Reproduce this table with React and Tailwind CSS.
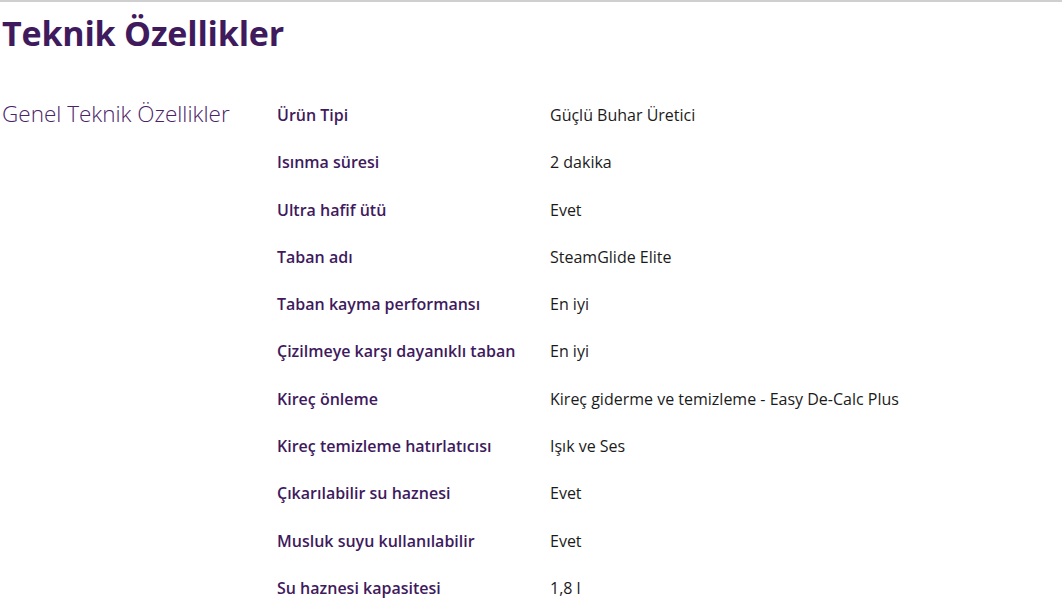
import React from 'react';

const SPECS = [
  ['Ürün Tipi', 'Güçlü Buhar Üretici'],
  ['Isınma süresi', '2 dakika'],
  ['Ultra hafif ütü', 'Evet'],
  ['Taban adı', 'SteamGlide Elite'],
  ['Taban kayma performansı', 'En iyi'],
  ['Çizilmeye karşı dayanıklı taban', 'En iyi'],
  ['Kireç önleme', 'Kireç giderme ve temizleme - Easy De-Calc Plus'],
  ['Kireç temizleme hatırlatıcısı', 'Işık ve Ses'],
  ['Çıkarılabilir su haznesi', 'Evet'],
  ['Musluk suyu kullanılabilir', 'Evet'],
  ['Su haznesi kapasitesi', '1,8 l'],
];

export default function App() {
  return (
    <div className="min-h-[606px] bg-white border-t-2 border-[#cfcfcf] font-['Open_Sans',sans-serif] overflow-hidden">
      <h1 className="pl-[2px] pt-[8px] text-[34px] leading-[46px] font-bold text-[#3f1a5d] tracking-[-0.2px]">
        Teknik Özellikler
      </h1>

      {/* spec block */}
      <div className="flex mt-[47px]">
        <h2 className="w-[277px] shrink-0 pl-[2px] -mt-[3px] text-[22.5px] leading-[28px] font-light text-[#4a2468]">
          Genel Teknik Özellikler
        </h2>
        <dl className="flex flex-col">
          {SPECS.map(([label, value]) => (
            <div key={label} className="flex h-[47.3px] text-[16px] leading-[22px] pt-[1px]">
              <dt className="w-[273px] shrink-0 font-semibold text-[#3f1a5d]">{label}</dt>
              <dd className="text-[#1b1b1b]">{value}</dd>
            </div>
          ))}
        </dl>
      </div>
    </div>
  );
}
